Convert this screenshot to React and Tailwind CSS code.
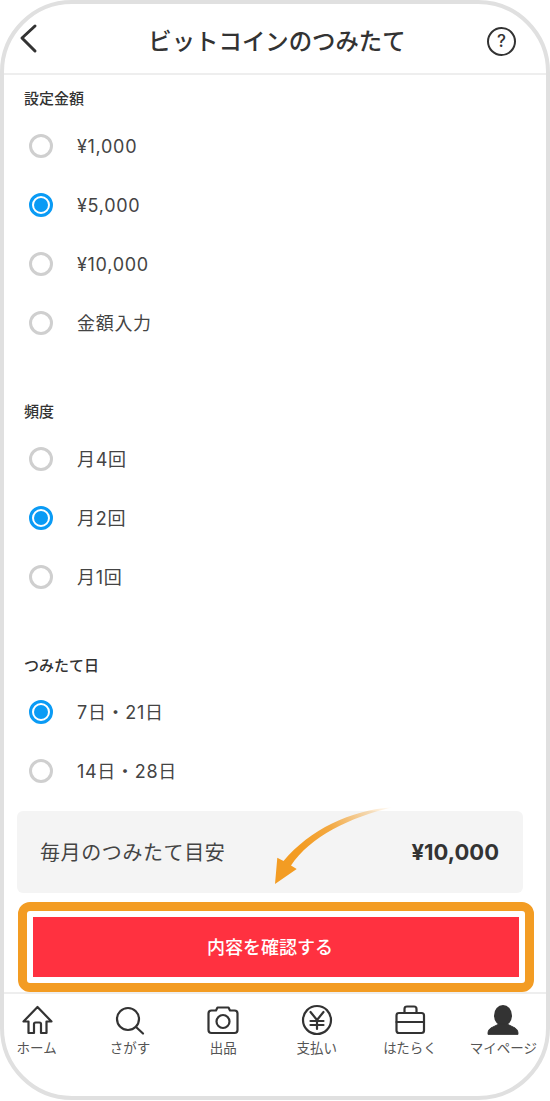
import React from "react";

const Radio = ({ label, checked }) => (
	<div className="flex items-center h-[59px] pl-[25px]">
		{checked ? (
			<span className="flex items-center justify-center w-6 h-6 rounded-full border-[3px] border-[#0a9bf5]">
				<span className="w-3.5 h-3.5 rounded-full bg-[#0a9bf5]" />
			</span>
		) : (
			<span className="w-6 h-6 rounded-full border-[3px] border-[#cfcfcf]" />
		)}
		<span className="ml-[24px] pt-[2px] text-[18px] tracking-[0.7px] text-[#444]">{label}</span>
	</div>
);

const Section = ({ title, items, className, titleClassName = "mb-2" }) => (
	<section className={className}>
		<h2 className={`pl-5 h-5 leading-[22px] text-[15px] font-medium text-[#333] ${titleClassName}`}>{title}</h2>
		{items.map((item) => (
			<Radio key={item.label} label={item.label} checked={item.checked} />
		))}
	</section>
);

const NavIcon = ({ children }) => (
	<svg width="36" height="32" viewBox="0 0 36 32" fill="none" stroke="#333" strokeWidth="2.2" strokeLinecap="round" strokeLinejoin="round">
		{children}
	</svg>
);

const navItems = [
	{
		label: "ホーム",
		icon: <path d="M18.5 3 L4.5 17.5 H9.5 V29 H15 V20 Q15 18.5 16.5 18.5 H20.5 Q22 18.5 22 20 V29 H27.5 V17.5 H32.5 Z" />,
	},
	{
		label: "さがす",
		icon: (
			<>
				<circle cx="16" cy="15" r="11" />
				<path d="M24 23 L31 29.5" />
			</>
		),
	},
	{
		label: "出品",
		icon: (
			<>
				<path d="M6.5 6.5 H11 L12.5 3.5 H23.5 L25 6.5 H29.5 Q32.5 6.5 32.5 9.5 V26 Q32.5 29 29.5 29 H6.5 Q3.5 29 3.5 26 V9.5 Q3.5 6.5 6.5 6.5 Z" />
				<circle cx="18" cy="17.5" r="6.5" />
			</>
		),
	},
	{
		label: "支払い",
		icon: (
			<>
				<circle cx="18" cy="16" r="14" />
				<path d="M11.5 8 L18 16 L24.5 8 M18 16 V25 M11.5 17 H24.5 M11.5 21 H24.5" />
			</>
		),
	},
	{
		label: "はたらく",
		icon: (
			<>
				<path d="M7 9 H29.5 Q32 9 32 11.5 V26.5 Q32 29 29.5 29 H7 Q4.5 29 4.5 26.5 V11.5 Q4.5 9 7 9 Z" />
				<path d="M4.5 18 H32 M12.5 9 V5 Q12.5 2.5 15 2.5 H22 Q24.5 2.5 24.5 5 V9" />
			</>
		),
	},
	{
		label: "マイページ",
		icon: (
			<>
				<ellipse cx="18" cy="11.5" rx="9" ry="10.5" fill="#333" stroke="none" />
				<path d="M3 30 Q2.5 25 8 23 L14 20 H22 L28 23 Q33.5 25 33 30 Z" fill="#333" stroke="#333" strokeWidth="1" />
			</>
		),
	},
];

function App() {
	return (
		<div className="bg-white h-[1101px] font-['Inter','Noto_Sans_CJK_JP',sans-serif]">
			<div className="flex flex-col h-[1100px] border-4 border-[#e0e0e0] rounded-[72px] overflow-hidden bg-white">
				{/* Header */}
				<header className="flex items-center justify-between shrink-0 h-[71px] border-b-2 border-[#eeeeee] pt-1.5 pl-[15px] pr-[30px]">
					<svg className="-mt-1.5" width="20" height="32" viewBox="0 0 20 32" fill="none" stroke="#333" strokeWidth="3" strokeLinecap="round" strokeLinejoin="round">
						<path d="M16 3 L3 15 L16 28" />
					</svg>
					<h1 className="text-[23.4px] font-medium text-[#333] ml-[28px]">ビットコインのつみたて</h1>
					<span className="flex items-center justify-center w-[29px] h-[29px] rounded-full border-2 border-[#333] text-[17px] font-medium text-[#333]">?</span>
				</header>

				<main className="pt-[13px]">
					<Section
						title="設定金額"
						items={[{ label: "¥1,000" }, { label: "¥5,000", checked: true }, { label: "¥10,000" }, { label: "金額入力" }]}
					/>
					<Section
						className="mt-[49px]"
						title="頻度"
						items={[{ label: "月4回" }, { label: "月2回", checked: true }, { label: "月1回" }]}
					/>
					<Section
						className="mt-[49px]"
						titleClassName="mb-[7px]"
						title="つみたて日"
						items={[{ label: "7日・21日", checked: true }, { label: "14日・28日" }]}
					/>

					{/* Monthly estimate */}
					<div className="relative flex items-center justify-between h-[82px] mt-[11px] ml-[13px] w-[506px] rounded-md bg-[#f4f4f4] pl-[23px] pr-[24px]">
						<span className="pt-[2px] text-[20px] tracking-[0.6px] text-[#444]">毎月のつみたて目安</span>
						<span className="text-[22px] font-bold text-[#333]">¥10,000</span>
						<svg className="absolute left-[233px] top-[-16px]" width="160" height="100" viewBox="0 0 160 100">
							<defs>
								<linearGradient id="arrowFade" x1="143" y1="12" x2="25" y2="89" gradientUnits="userSpaceOnUse">
									<stop offset="0" stopColor="#f39c23" stopOpacity="0" />
									<stop offset="0.45" stopColor="#f39c23" stopOpacity="0.85" />
									<stop offset="0.7" stopColor="#f39c23" />
								</linearGradient>
							</defs>
							<path d="M143 12.3 C100 15 60 35 33.5 66 L27.3 62.7 L25 89 L46.7 74 L41 70.5 C60 42 100 22 143 12.3 Z" fill="url(#arrowFade)" />
						</svg>
					</div>

					{/* Confirm button with orange highlight */}
					<div className="relative z-10 mt-[9px] ml-[14px] w-[516px] h-[90px] rounded-[12px] border-[9px] border-[#f39c23] bg-white p-[6px]">
						<button className="flex items-center justify-center w-full h-full pr-[12px] bg-[#ff3140] text-white text-[18px] font-medium">内容を確認する</button>
					</div>
				</main>

				{/* Bottom nav */}
				<nav className="grid grid-cols-6 w-[560px] ml-[-14px] shrink-0 border-t-2 border-[#eeeeee] pt-[10px]">
					{navItems.map((item) => (
						<div key={item.label} className="flex flex-col items-center">
							<NavIcon>{item.icon}</NavIcon>
							<span className="mt-[2px] text-[13.5px] leading-5 text-[#555] whitespace-nowrap">{item.label}</span>
						</div>
					))}
				</nav>
			</div>
		</div>
	);
}

export default App;
